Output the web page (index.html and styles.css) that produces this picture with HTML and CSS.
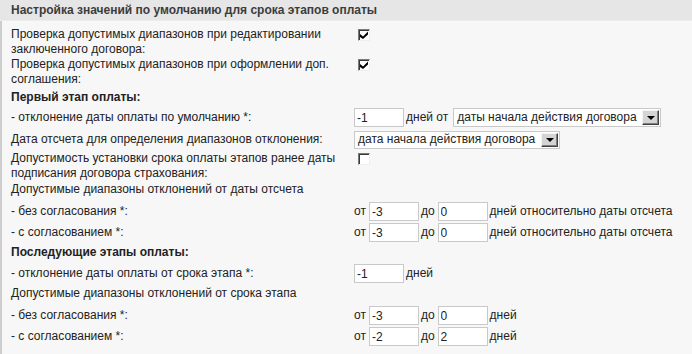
FILE: index.html
```html
<!DOCTYPE html>
<html lang="ru">
<head>
    <meta charset="UTF-8">
    <title>Настройка значений по умолчанию</title>
    <link rel="stylesheet" href="styles.css">
</head>
<body>
    <div class="panel">
        <div class="panel-title">Настройка значений по умолчанию для срока этапов оплаты</div>

        <div class="panel-body">
            <!-- Общие проверки -->
            <div class="row">
                <div class="label">Проверка допустимых диапазонов при редактировании заключенного договора:</div>
                <div class="value top"><span class="check"><svg viewBox="0 0 8 8"><polygon points="0,3 3,5.5 8,0.5 8,3.5 3,8 0,6"/></svg></span></div>
            </div>
            <div class="row">
                <div class="label">Проверка допустимых диапазонов при оформлении доп. соглашения:</div>
                <div class="value top"><span class="check"><svg viewBox="0 0 8 8"><polygon points="0,3 3,5.5 8,0.5 8,3.5 3,8 0,6"/></svg></span></div>
            </div>

            <!-- Первый этап -->
            <div class="row heading sp-3">
                <div class="label">Первый этап оплаты:</div>
            </div>
            <div class="row ctrl sp-2">
                <div class="label">- отклонение даты оплаты по умолчанию *:</div>
                <div class="value">
                    <input class="field" type="text" value="-1">
                    <span class="txt">дней от</span>
                    <span class="combo wide"><span class="combo-text">даты начала действия договора</span><span class="combo-btn"><i></i></span></span>
                </div>
            </div>
            <div class="row ctrl sp-1">
                <div class="label">Дата отсчета для определения диапазонов отклонения:</div>
                <div class="value">
                    <span class="combo"><span class="combo-text">дата начала действия договора</span><span class="combo-btn"><i></i></span></span>
                </div>
            </div>
            <div class="row sp-1">
                <div class="label">Допустимость установки срока оплаты этапов ранее даты подписания договора страхования:</div>
                <div class="value top"><span class="check"></span></div>
            </div>
            <div class="row sp-1">
                <div class="label">Допустимые диапазоны отклонений от даты отсчета</div>
            </div>
            <div class="row ctrl sp-4">
                <div class="label">- без согласования *:</div>
                <div class="value">
                    <span class="txt first">от</span><input class="field" type="text" value="-3">
                    <span class="txt">до</span><input class="field" type="text" value="0">
                    <span class="txt">дней относительно даты отсчета</span>
                </div>
            </div>
            <div class="row ctrl">
                <div class="label">- с согласованием *:</div>
                <div class="value">
                    <span class="txt first">от</span><input class="field" type="text" value="-3">
                    <span class="txt">до</span><input class="field" type="text" value="0">
                    <span class="txt">дней относительно даты отсчета</span>
                </div>
            </div>

            <!-- Последующие этапы -->
            <div class="row heading sp-2">
                <div class="label">Последующие этапы оплаты:</div>
            </div>
            <div class="row ctrl sp-3">
                <div class="label">- отклонение даты оплаты от срока этапа *:</div>
                <div class="value">
                    <input class="field" type="text" value="-1">
                    <span class="txt">дней</span>
                </div>
            </div>
            <div class="row sp-2">
                <div class="label">Допустимые диапазоны отклонений от срока этапа</div>
            </div>
            <div class="row ctrl sp-4">
                <div class="label">- без согласования *:</div>
                <div class="value">
                    <span class="txt first">от</span><input class="field" type="text" value="-3">
                    <span class="txt">до</span><input class="field" type="text" value="0">
                    <span class="txt">дней</span>
                </div>
            </div>
            <div class="row ctrl">
                <div class="label">- с согласованием *:</div>
                <div class="value">
                    <span class="txt first">от</span><input class="field" type="text" value="-2">
                    <span class="txt">до</span><input class="field" type="text" value="2">
                    <span class="txt">дней</span>
                </div>
            </div>
        </div>
    </div>
</body>
</html>
```

FILE: styles.css
```css
* {
    margin: 0;
    padding: 0;
    box-sizing: border-box;
}

body {
    background: #f7f7f7;
    color: #222;
    font-family: "Liberation Sans", Arial, sans-serif;
    font-size: 12px;
    line-height: 15px;
}

.panel {
    width: 692px;
}

.panel-title {
    height: 21px;
    padding: 3px 11px 0;
    background: #e6e6e6;
    border-bottom: 1px solid #ececec;
    color: #3c3c3c;
    font-weight: bold;
    line-height: 15px;
}

.panel-body {
    padding: 6px 0 7px 9px;
    border-left: 2px solid #cdcdcd;
}

.row {
    display: grid;
    grid-template-columns: 343px 1fr;
    align-items: center;
}

.row.ctrl {
    height: 21px;
}

.row.heading {
    font-weight: bold;
}

/* отступы между строками */
.sp-1 { margin-top: 1px; }
.sp-2 { margin-top: 2px; }
.sp-3 { margin-top: 3px; }
.sp-4 { margin-top: 4px; }

.label {
    padding-right: 4px;
}

.value {
    display: flex;
    align-items: center;
    white-space: nowrap;
}

.value.top {
    align-self: start;
}

.txt {
    margin: 0 3px 0 2px;
}

.txt.first {
    margin-left: 0;
}

.field {
    width: 50px;
    height: 19px;
    padding: 0 2px;
    border: 1px solid #c9c9c9;
    background: #fff;
    color: #222;
    font: 12px "Liberation Sans", Arial, sans-serif;
    outline: none;
}

.check {
    display: inline-block;
    width: 12px;
    height: 12px;
    margin: 2px 0 0 4px;
    background: #fff;
    border-top: 1px solid #7a7a7a;
    border-left: 1px solid #7a7a7a;
    border-right: 1px solid #efefef;
    border-bottom: 1px solid #efefef;
    box-shadow: inset 1px 1px 0 #3a3a3a;
}

.check svg {
    display: block;
    width: 8px;
    height: 8px;
    margin: 1px 0 0 1px;
    fill: #000;
}

.combo {
    display: inline-flex;
    align-items: center;
    width: 206px;
    height: 18px;
    padding: 1px 1px 1px 0;
    border: 1px solid #c9c9c9;
    background: #fff;
}

.combo.wide {
    width: 208px;
    height: 19px;
    margin-left: 2px;
}

.combo-text {
    flex: 1;
    padding-left: 3px;
    font-size: 12px;
    overflow: hidden;
}

.combo-btn {
    display: flex;
    align-items: center;
    justify-content: center;
    width: 17px;
    height: 100%;
    background: #d4d4d4;
    border-top: 1px solid #f4f4f4;
    border-left: 1px solid #f4f4f4;
    border-right: 1px solid #404040;
    border-bottom: 1px solid #404040;
    box-shadow: inset -1px -1px 0 #808080;
}

.combo-btn i {
    width: 0;
    height: 0;
    border-left: 4px solid transparent;
    border-right: 4px solid transparent;
    border-top: 4px solid #000;
}
```
